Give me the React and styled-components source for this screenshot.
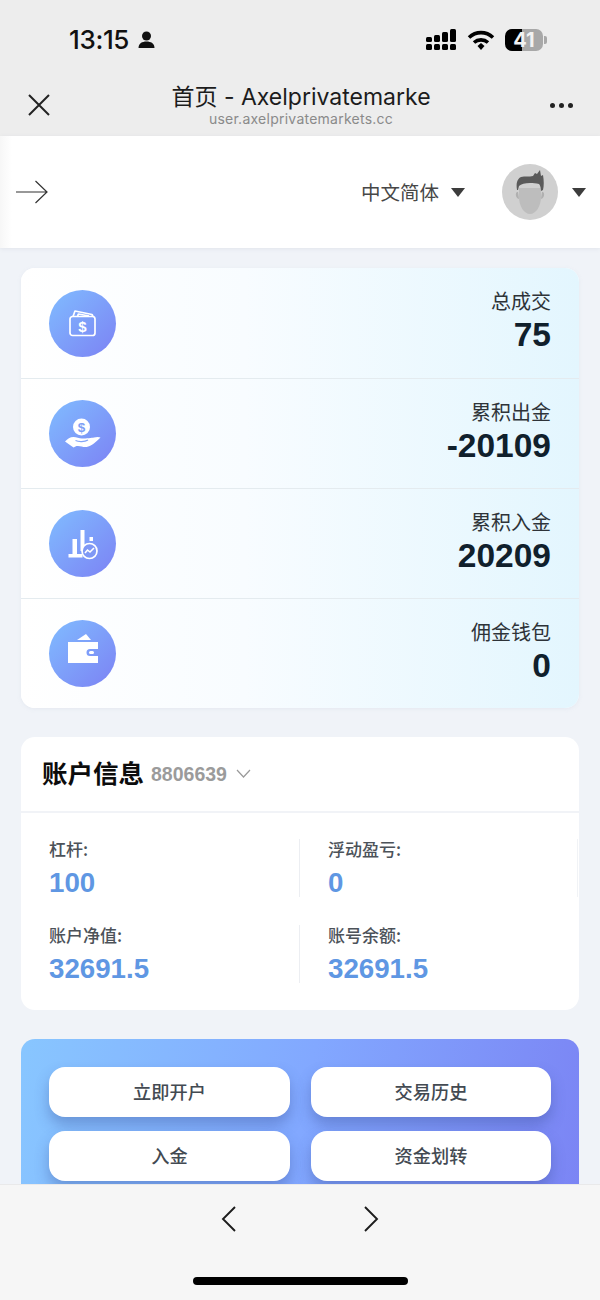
import React from "react";
import styled, { createGlobalStyle } from "styled-components";

const Global = createGlobalStyle`
  html, body { margin: 0; padding: 0; background: #f0f3f8; }
  * { box-sizing: border-box; }
  body { font-family: "Liberation Sans", "Noto Sans CJK SC", sans-serif; }
`;
const cjk = `"Noto Sans CJK SC", sans-serif`;
const latin = `"Liberation Sans", "Noto Sans CJK SC", sans-serif`;

const Screen = styled.div`
  width: 600px; height: 1300px; display: flex; flex-direction: column; overflow: hidden;
`;
const Chrome = styled.header`
  height: 136px; flex: none; background: #ededed; display: flex; flex-direction: column;
`;
const StatusBar = styled.div`
  height: 70px; flex: none; padding: 19px 53px 0 69px; display: flex; align-items: flex-start; justify-content: space-between;
`;
const TimeGroup = styled.div`
  display: flex; align-items: center; gap: 9px; height: 42px;
`;
const Time = styled.span`
  font: 500 26px/42px Inter, sans-serif; color: #111; letter-spacing: -0.35px;
`;
const StatusIcons = styled.div`
  display: flex; align-items: center; gap: 10px; height: 42px;
`;
const Battery = styled.div`
  width: 38px; height: 22px; border-radius: 7px; overflow: hidden;
  background: linear-gradient(90deg, #000 0 44%, #a8a8a8 44% 100%);
  display: flex; align-items: center; justify-content: center;
  font: 700 20px/22px Inter, sans-serif; color: #f2f2f2;
`;
const BatteryCap = styled.div`
  width: 3px; height: 8px; background: #a8a8a8; border-radius: 0 2px 2px 0; margin-left: -9px;
`;
const NavBar = styled.div`
  flex: 1; min-height: 0; padding: 0 26px 0 27px; display: flex; align-items: flex-start; justify-content: space-between;
`;
const NavIcon = styled.div`
  width: 24px; height: 70px; display: flex; align-items: center; justify-content: center; flex: none;
`;
const NavTitle = styled.div`
  display: flex; flex-direction: column; align-items: center; margin-top: 13px; margin-left: 1px;
`;
const TitleText = styled.div`
  font: 400 23px/28px Inter, ${cjk}; color: #1c1c1c; white-space: nowrap;
`;
const SubTitle = styled.div`
  font: 400 14px/14px Inter, sans-serif; color: #8a8a8a; white-space: nowrap; margin-top: 1px; letter-spacing: .25px;
`;
const Dots = styled.div`
  display: flex; gap: 4px;
`;
const Dot = styled.i`
  display: block; width: 5px; height: 5px; border-radius: 50%; background: #222;
`;
const TopBar = styled.div`
  height: 112px; flex: none; background: linear-gradient(90deg, #f7f7f7 0, #fff 12px);
  padding: 0 14px 0 16px; display: flex; align-items: center;
  box-shadow: 0 1px 4px rgba(120, 130, 150, .12);
  position: relative; z-index: 1;
`;
const Lang = styled.div`
  margin-left: auto; display: flex; align-items: center; font: 400 19.5px/24px ${cjk}; color: #474747;
`;
const Caret = styled.i`
  display: block; width: 0; height: 0; border-left: 7px solid transparent; border-right: 7px solid transparent;
  border-top: 9px solid #3c3c3c; margin-left: ${p => p.$gap}px;
`;
const Avatar = styled.div`
  width: 56px; height: 56px; border-radius: 50%; background: #d0d0d0; overflow: hidden; margin-left: 37px;
`;
const Main = styled.main`
  flex: 1; min-height: 0; overflow: hidden; padding: 20px 21px 0;
  background: #f0f3f8; display: flex; flex-direction: column;
`;
const StatsCard = styled.section`
  flex: none; border-radius: 14px; overflow: hidden; background: #fff;
  box-shadow: 0 1px 4px rgba(150, 165, 190, .12);
`;
const StatRow = styled.div`
  height: 110px; padding: 0 28px; display: flex; align-items: center; justify-content: space-between;
  background: linear-gradient(90deg, #fff 0, #f8fcff 40%, #e3f6fe 100%);
  & + & { border-top: 1px solid #e4ebef; }
`;
const Circle = styled.div`
  width: 67px; height: 67px; border-radius: 50%;
  background: linear-gradient(135deg, #80bcff 0, #7c82f4 100%);
  display: flex; align-items: center; justify-content: center;
`;
const StatText = styled.div`
  display: flex; flex-direction: column; align-items: flex-end; margin-top: -2px;
`;
const StatLabel = styled.div`
  font: 400 20px/24px ${cjk}; color: #2e3338;
`;
const StatValue = styled.div`
  font: 700 33.5px/40px ${latin}; color: #10202c; margin-top: 2px;
`;
const InfoCard = styled.section`
  flex: none; margin-top: 29px; height: 273px; background: #fff; border-radius: 14px;
`;
const InfoHead = styled.div`
  height: 76px; padding: 0 21px 4px; display: flex; align-items: center; border-bottom: 2px solid #f1f3f7;
`;
const InfoTitle = styled.h2`
  margin: 0; font: 700 25.5px/32px ${cjk}; color: #0c0c0c;
`;
const Account = styled.span`
  font: 700 19.5px/24px ${latin}; color: #9b9b9b; margin-left: 7px; margin-top: 3px;
`;
const Chevron = styled.svg`
  margin-left: 9px; margin-top: 2px;
`;
const InfoGrid = styled.div`
  display: grid; grid-template-columns: 278px 279px; grid-auto-rows: 58px; row-gap: 28px; padding-top: 26px;
`;
const InfoCell = styled.div`
  padding-left: 28px; display: flex; flex-direction: column;
  &:nth-child(even) { border-left: 1px solid #eceef2; }
  &:nth-child(2) { border-right: 1px solid #f1f3f6; }
`;
const InfoLabel = styled.div`
  font: 500 17px/20px ${cjk}; color: #4c5259;
`;
const InfoValue = styled.div`
  font: 700 27.7px/34px ${latin}; color: #5f97e3; margin-top: 7px;
`;
const ActionCard = styled.section`
  flex: none; margin-top: 29px; height: 180px; border-radius: 14px;
  background: linear-gradient(100deg, #88c6ff 0, #82a8ff 50%, #7b84f4 100%);
  padding: 28px 28px 0; display: grid; grid-template-columns: 241px 240px; column-gap: 21px; grid-auto-rows: 50px; row-gap: 14px;
`;
const ActionButton = styled.button`
  border: 0; border-radius: 16px; background: #fff; height: 50px; padding: 0 0 2px;
  font: 500 18.2px/24px ${cjk}; color: #434a52;
  box-shadow: 0 8px 14px rgba(50, 70, 140, .34);
`;
const BottomBar = styled.footer`
  height: 116px; flex: none; background: #f6f6f6; border-top: 1px solid #e9e9ea; position: relative; z-index: 2;
  display: flex; flex-direction: column; align-items: center;
`;
const Pager = styled.div`
  display: flex; gap: 118px; margin-top: 20px;
`;
const HomeBar = styled.div`
  width: 215px; height: 8px; border-radius: 4px; background: #000; margin-top: 44px;
`;

const WalletDollar = () => (
  <svg width="30" height="30" viewBox="0 0 30 30" fill="none" stroke="#fff" strokeWidth="1.700" strokeLinejoin="round">
    <rect x="2" y="8.500" width="25" height="19" rx="2.500" />
    <path d="M5 8.500l2-5.500 17 3.500 1 2M9.500 8l1-2 10.500 2" />
    <text x="14.500" y="23.500" textAnchor="middle" fill="#fff" stroke="none" fontSize="15" fontWeight="700" fontFamily="Liberation Sans">$</text>
  </svg>
);
const HandCoin = () => (
  <svg width="36" height="34" viewBox="0 0 36 34" fill="none">
    <circle cx="16.500" cy="10" r="8.500" fill="#fff" />
    <text x="16.500" y="15" textAnchor="middle" fill="#7da0f6" fontSize="13.500" fontWeight="700" fontFamily="Liberation Sans">$</text>
    <path d="M0 24.500c2.500-2.500 5-4.500 8.500-4.500 3 0 5.500 1.500 8.500 1.500 4 0 10-.5 12-1 2.500-.7 5-.7 6.500 0-4 3.500-9 9-14 9.500-4 .3-6-1.500-10-1l-3 1.500z" fill="#fff" />
    <path d="M10.500 23.500c3 1.500 9 1.500 12.500-.5" stroke="#83a5f8" strokeWidth="1.300" />
  </svg>
);
const ChartCoin = () => (
  <svg width="34" height="34" viewBox="0 0 34 34" fill="none">
    <rect x="2.500" y="27" width="14" height="3.500" fill="#fff" />
    <rect x="6.500" y="12" width="4.500" height="15" fill="#fff" />
    <rect x="14.500" y="3" width="4" height="21" fill="#fff" />
    <rect x="23.500" y="10" width="3.500" height="4" fill="#fff" />
    <circle cx="23.500" cy="24" r="7.500" fill="#7f98f5" stroke="#fff" strokeWidth="1.700" />
    <path d="M19 26l2.500-3 2.500 2 4-4" stroke="#fff" strokeWidth="1.600" />
  </svg>
);
const Wallet = () => (
  <svg width="32" height="40" viewBox="0 0 32 40" fill="none">
    <path d="M10 6l9-6 5 6z" fill="#fff" />
    <path d="M1 8h30v7H23a3.500 3.500 0 0 0 0 7h8v7H1z" fill="#fff" />
    <rect x="22" y="17" width="5" height="3" rx="1.500" fill="#fff" />
  </svg>
);
const AvatarFace = () => (
  <svg width="56" height="56" viewBox="0 0 56 56">
    <path d="M16 28c-3-1-3 6 1 7M40 28c3-1 3 6-1 7" fill="#b0b0b0" />
    <path d="M17 24v9c0 9 5 17 11 17s11-8 11-17v-9z" fill="#bdbdbd" />
    <path d="M15 26c-1-7 0-11 4-13 4-1 8 0 12-1l2-3 2 1 3-4 1 6 2-1c1 6 1 11 0 15l-2 1c0-3-1-6-2-7-3-1-6-1-9-1-5 0-9 1-11 3l-1 4z" fill="#5a5a5a" />
  </svg>
);

const stats = [
  ["总成交", "75", <WalletDollar />],
  ["累积出金", "-20109", <HandCoin />],
  ["累积入金", "20209", <ChartCoin />],
  ["佣金钱包", "0", <Wallet />],
];
const infos = [["杠杆:", "100"], ["浮动盈亏:", "0"], ["账户净值:", "32691.5"], ["账号余额:", "32691.5"]];
const actions = ["立即开户", "交易历史", "入金", "资金划转"];

export default function App() {
  return (
    <>
      <Global />
      <Screen>
        <Chrome>
          <StatusBar>
            <TimeGroup>
              <Time>13:15</Time>
              <svg width="17" height="18" viewBox="0 0 17 18" fill="#111">
                <circle cx="8.500" cy="5" r="4.500" />
                <path d="M0.500 17c0-4.500 3.500-6.500 8-6.500s8 2 8 6.500z" />
              </svg>
            </TimeGroup>
            <StatusIcons>
              <svg width="31" height="22" viewBox="0 0 31 22" fill="#000">
                {[0, 8, 16, 24].map(x => <rect key={x} x={x} y="15" width="6" height="6" rx="1.500" />)}
                <rect x="0" y="8" width="6" height="5" rx="1.500" />
                <rect x="8" y="6" width="6" height="7" rx="1.500" />
                <rect x="16" y="3" width="6" height="10" rx="1.500" />
                <rect x="24" y="0" width="6" height="13" rx="1.500" />
              </svg>
              <svg width="28" height="21" viewBox="0 0 28 21" fill="none" stroke="#000" strokeWidth="3.600">
                <path d="M2 7.500C9 1 19 1 26 7.500" />
                <path d="M7 12.500c4-3.500 10-3.500 14 0" />
                <path d="M10.500 16l3.500-3 3.500 3L14 20z" fill="#000" stroke="none" />
              </svg>
              <Battery>41</Battery>
              <BatteryCap />
            </StatusIcons>
          </StatusBar>
          <NavBar>
            <NavIcon>
              <svg width="24" height="24" viewBox="0 0 24 24" stroke="#222" strokeWidth="2" fill="none">
                <path d="M2 2l20 20M22 2L2 22" />
              </svg>
            </NavIcon>
            <NavTitle>
              <TitleText>首页 - Axelprivatemarke</TitleText>
              <SubTitle>user.axelprivatemarkets.cc</SubTitle>
            </NavTitle>
            <NavIcon><Dots><Dot /><Dot /><Dot /></Dots></NavIcon>
          </NavBar>
        </Chrome>
        <TopBar>
          <svg width="32" height="24" viewBox="0 0 32 24" stroke="#333" strokeWidth="1.200" fill="none">
            <path d="M0 12h31M19.500 1L31 12 19.500 23" />
          </svg>
          <Lang>中文简体<Caret $gap={12} /></Lang>
          <Avatar><AvatarFace /></Avatar>
          <Caret $gap={14} />
        </TopBar>
        <Main>
          <StatsCard>
            {stats.map(([label, value, icon]) => (
              <StatRow key={label}>
                <Circle>{icon}</Circle>
                <StatText>
                  <StatLabel>{label}</StatLabel>
                  <StatValue>{value}</StatValue>
                </StatText>
              </StatRow>
            ))}
          </StatsCard>
          <InfoCard>
            <InfoHead>
              <InfoTitle>账户信息</InfoTitle>
              <Account>8806639</Account>
              <Chevron width="15" height="9" viewBox="0 0 15 9" fill="none" stroke="#9a9a9a" strokeWidth="1.200">
                <path d="M1 1l6.500 7L14 1" />
              </Chevron>
            </InfoHead>
            <InfoGrid>
              {infos.map(([label, value]) => (
                <InfoCell key={label}>
                  <InfoLabel>{label}</InfoLabel>
                  <InfoValue>{value}</InfoValue>
                </InfoCell>
              ))}
            </InfoGrid>
          </InfoCard>
          <ActionCard>
            {actions.map(a => <ActionButton key={a}>{a}</ActionButton>)}
          </ActionCard>
        </Main>
        <BottomBar>
          <Pager>
            <svg width="24" height="28" viewBox="0 0 24 28" fill="none" stroke="#1c1c1c" strokeWidth="1.900">
              <path d="M18 2L6 14l12 12" />
            </svg>
            <svg width="24" height="28" viewBox="0 0 24 28" fill="none" stroke="#1c1c1c" strokeWidth="1.900">
              <path d="M6 2l12 12L6 26" />
            </svg>
          </Pager>
          <HomeBar />
        </BottomBar>
      </Screen>
    </>
  );
}
